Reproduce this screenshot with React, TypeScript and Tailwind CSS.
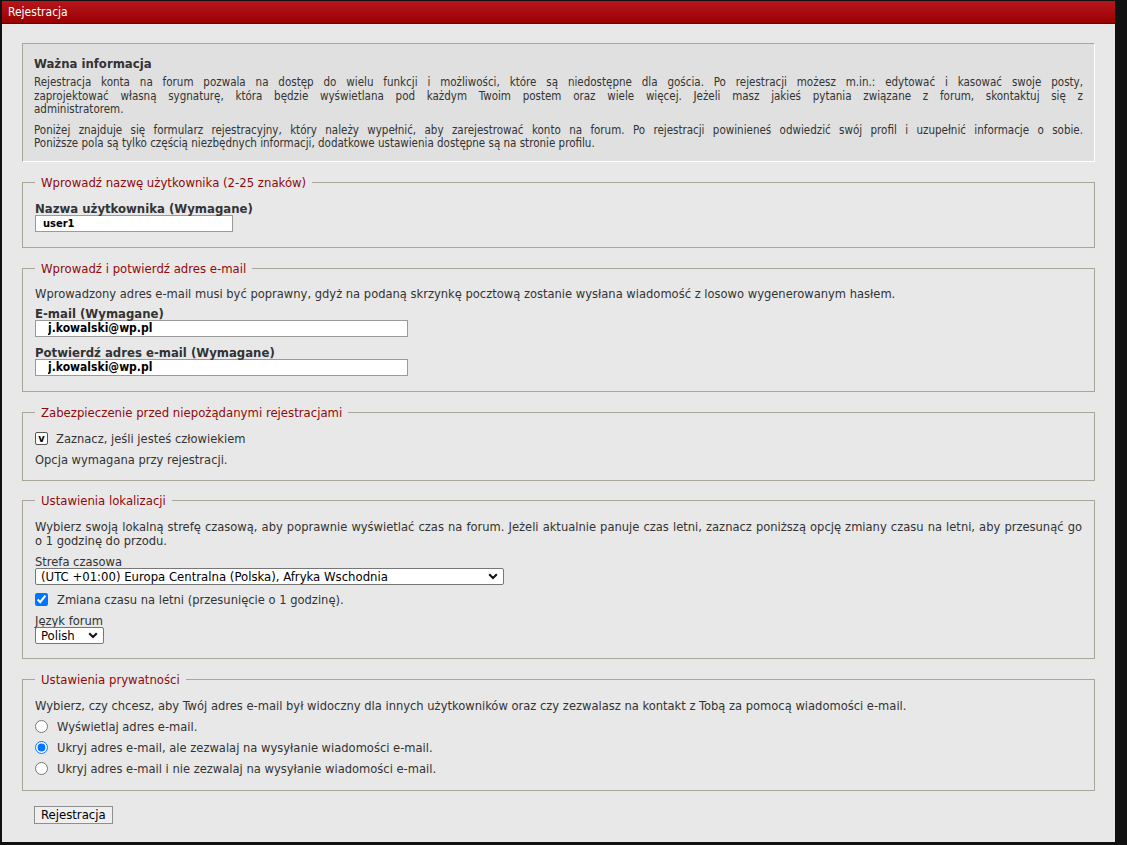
import React from "react";

const FONT = "font-['DejaVu_Sans_Condensed','DejaVu_Sans',sans-serif]";

function JLine({ children, last }: { children: React.ReactNode; last?: boolean }) {
  return (
    <span className={last ? "block" : "block text-justify [text-align-last:justify]"}>{children}</span>
  );
}

function Fieldset({ legend, children, className = "" }: { legend: string; children: React.ReactNode; className?: string }) {
  return (
    <fieldset className={`border border-[#aaa69a] px-[12px] min-w-0 ${className}`}>
      <legend className="ml-0 px-[6px] text-[13px] leading-[15px] text-[#8f0a0a]">{legend}</legend>
      {children}
    </fieldset>
  );
}

function Chevron() {
  return (
    <svg width="10" height="7" viewBox="0 0 10 7" className="pointer-events-none absolute right-[6px] top-[5px]">
      <path d="M1.2 1.2 L5 5 L8.8 1.2" fill="none" stroke="#111" strokeWidth="2" />
    </svg>
  );
}

export default function App() {
  return (
    <div className={`min-h-[845px] w-full bg-[#111111] pt-px pl-[2px] pb-[3px] ${FONT} text-[#333333]`}>
      <div className="w-[1113px] bg-[#e8e8e8]">
        <div className="h-[23px] border-b border-[#1a1a1a] bg-gradient-to-b from-[#b8161c] to-[#980000] px-[6px] text-[12px] leading-[22px] text-white">
          Rejestracja
        </div>
        <div className="px-[20px] pt-[19px] pb-[18px]">
          {/* Info box */}
          <div className="border border-t-[#aaa69a] border-l-[#aaa69a] border-r-white border-b-white bg-[#dfe0df] px-[11px] pt-[11px] pb-[10px]">
            <div className="mb-[3px] text-[13px] font-bold leading-[18px] text-[#333]">Ważna informacja</div>
            <div className="text-[11.5px] leading-[13.5px]">
              <JLine>
                Rejestracja konta na forum pozwala na dostęp do wielu funkcji i możliwości, które są niedostępne dla gościa. Po rejestracji możesz m.in.: edytować i kasować swoje posty,
              </JLine>
              <JLine>
                zaprojektować własną sygnaturę, która będzie wyświetlana pod każdym Twoim postem oraz wiele więcej. Jeżeli masz jakieś pytania związane z forum, skontaktuj się z
              </JLine>
              <JLine last>administratorem.</JLine>
            </div>
            <div className="mt-[7px] text-[11.5px] leading-[13.5px]">
              <JLine>
                Poniżej znajduje się formularz rejestracyjny, który należy wypełnić, aby zarejestrować konto na forum. Po rejestracji powinieneś odwiedzić swój profil i uzupełnić informacje o sobie.
              </JLine>
              <JLine last>
                Poniższe pola są tylko częścią niezbędnych informacji, dodatkowe ustawienia dostępne są na stronie profilu.
              </JLine>
            </div>
          </div>

          {/* Username */}
          <Fieldset legend="Wprowadź nazwę użytkownika (2-25 znaków)" className="mt-[13px] pt-[12px] pb-[15px]">
            <div className="text-[13px] font-bold leading-[13px]">Nazwa użytkownika (Wymagane)</div>
            <input
              readOnly
              value="user1"
              className="block h-[17px] w-[198px] border border-[#9a9a9a] bg-white pl-[7px] text-[11px] font-bold leading-[15px] text-black outline-none"
            />
          </Fieldset>

          {/* Email */}
          <Fieldset legend="Wprowadź i potwierdź adres e-mail" className="mt-[13px] pt-[10px] pb-[15px]">
            <div className="text-[12.8px] leading-[15px]">
              Wprowadzony adres e-mail musi być poprawny, gdyż na podaną skrzynkę pocztową zostanie wysłana wiadomość z losowo wygenerowanym hasłem.
            </div>
            <div className="mt-[6px] text-[13px] font-bold leading-[13px]">E-mail (Wymagane)</div>
            <input
              readOnly
              value="j.kowalski@wp.pl"
              className="block h-[17px] w-[373px] border border-[#9a9a9a] bg-white pl-[12px] text-[12px] font-bold leading-[15px] text-black outline-none"
            />
            <div className="mt-[9px] text-[13px] font-bold leading-[13px]">Potwierdź adres e-mail (Wymagane)</div>
            <input
              readOnly
              value="j.kowalski@wp.pl"
              className="block h-[17px] w-[373px] border border-[#9a9a9a] bg-white pl-[12px] text-[12px] font-bold leading-[15px] text-black outline-none"
            />
          </Fieldset>

          {/* Captcha */}
          <Fieldset legend="Zabezpieczenie przed niepożądanymi rejestracjami" className="mt-[13px] pt-[11px] pb-[13px]">
            <div className="flex h-[15px] items-center text-[12.8px] leading-[15px]">
              <span className="flex h-[13px] w-[13px] items-center justify-center rounded-[2px] border border-[#555] bg-white text-[11px] font-bold leading-none text-black">
                v
              </span>
              <span className="ml-[8px]">Zaznacz, jeśli jesteś człowiekiem</span>
            </div>
            <div className="mt-[6px] text-[12.8px] leading-[15px]">Opcja wymagana przy rejestracji.</div>
          </Fieldset>

          {/* Localization */}
          <Fieldset legend="Ustawienia lokalizacji" className="mt-[12px] pt-[12px] pb-[14px]">
            <div className="text-[12.8px] leading-[14px]">
              <JLine>
                Wybierz swoją lokalną strefę czasową, aby poprawnie wyświetlać czas na forum. Jeżeli aktualnie panuje czas letni, zaznacz poniższą opcję zmiany czasu na letni, aby przesunąć go
              </JLine>
              <JLine last>o 1 godzinę do przodu.</JLine>
            </div>
            <div className="mt-[7px] text-[12.8px] leading-[13px]">Strefa czasowa</div>
            <div className="relative w-[469px]">
              <select
                defaultValue="1"
                className="block h-[17px] w-full appearance-none rounded-[2px] border border-[#767676] bg-white pl-[5px] text-[13px] leading-[15px] text-black outline-none"
              >
                <option value="1">(UTC +01:00) Europa Centralna (Polska), Afryka Wschodnia</option>
              </select>
              <Chevron />
            </div>
            <label className="mt-[7px] flex h-[15px] items-center text-[12.8px] leading-[15px]">
              <input type="checkbox" defaultChecked className="m-0 h-[13px] w-[13px] accent-[#0075ff]" />
              <span className="ml-[9px]">Zmiana czasu na letni (przesunięcie o 1 godzinę).</span>
            </label>
            <div className="mt-[7px] text-[12.8px] leading-[13px]">Język forum</div>
            <div className="relative w-[69px]">
              <select
                defaultValue="pl"
                className="block h-[17px] w-full appearance-none rounded-[2px] border border-[#767676] bg-white pl-[5px] text-[13px] leading-[15px] text-black outline-none"
              >
                <option value="pl">Polish</option>
              </select>
              <Chevron />
            </div>
          </Fieldset>

          {/* Privacy */}
          <Fieldset legend="Ustawienia prywatności" className="mt-[13px] pt-[12px] pb-[11px]">
            <div className="text-[12.8px] leading-[14px]">
              Wybierz, czy chcesz, aby Twój adres e-mail był widoczny dla innych użytkowników oraz czy zezwalasz na kontakt z Tobą za pomocą wiadomości e-mail.
            </div>
            <div className="mt-[3px] flex flex-col">
              {[
                { t: "Wyświetlaj adres e-mail.", c: false },
                { t: "Ukryj adres e-mail, ale zezwalaj na wysyłanie wiadomości e-mail.", c: true },
                { t: "Ukryj adres e-mail i nie zezwalaj na wysyłanie wiadomości e-mail.", c: false },
              ].map((r) => (
                <label key={r.t} className="flex h-[21px] items-center text-[12.8px] leading-[15px]">
                  <input type="radio" name="priv" defaultChecked={r.c} className="m-0 h-[13px] w-[13px] accent-[#0075ff]" />
                  <span className="ml-[9px]">{r.t}</span>
                </label>
              ))}
            </div>
          </Fieldset>

          <div className="mt-[15px] flex pl-[12px]">
            <button className="h-[18px] border border-[#8f8f8f] bg-[#efefef] px-[6px] text-[13px] leading-[16px] text-black">
              Rejestracja
            </button>
          </div>
        </div>
      </div>
    </div>
  );
}
